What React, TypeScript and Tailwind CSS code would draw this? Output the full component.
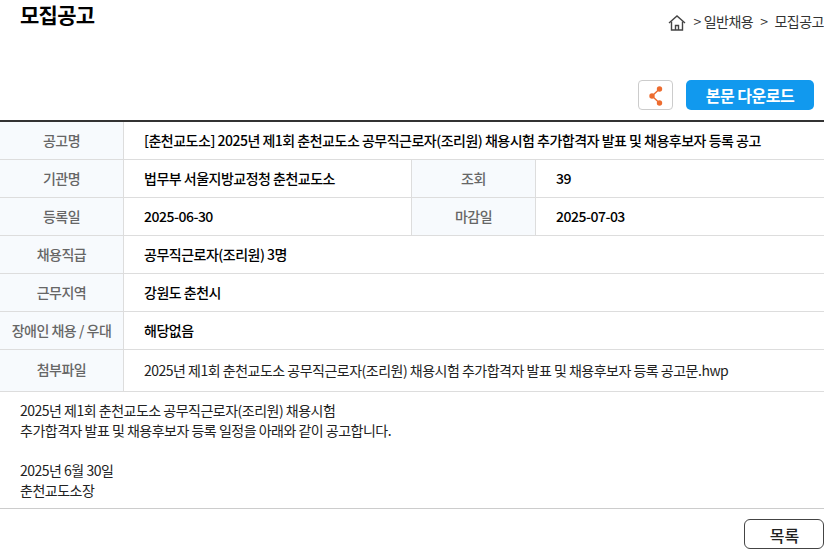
const KR = "font-['Noto_Sans_CJK_KR','Noto_Sans',sans-serif]";

function Label({ children, wide, lift }: { children: React.ReactNode; wide?: boolean; lift?: boolean }) {
  return (
    <div className={`flex items-center justify-center bg-[#f7fafd] text-[14px] font-medium tracking-[-0.5px] text-[#666] ${lift ? "pb-[2px]" : ""} ${wide ? "w-[123px]" : "w-[125px] border-x border-[#ddd]"}`}>
      {children}
    </div>
  );
}

function Row({ label, value, file }: { label: string; value: string; file?: boolean }) {
  return (
    <div className={`flex border-b border-[#ddd] ${file ? "h-[42px]" : "h-[38px]"}`}>
      <Label wide lift={file}>{label}</Label>
      <div className={`flex flex-1 items-center border-l border-[#ddd] pl-5 text-[14px] tracking-[-0.5px] ${file ? "text-[#222]" : "font-medium text-black"}`}>
        {value}
      </div>
    </div>
  );
}

function SplitRow({ a, b, c, d }: { a: string; b: string; c: string; d: string }) {
  return (
    <div className="flex h-[38px] border-b border-[#ddd]">
      <Label wide>{a}</Label>
      <div className="flex w-[288px] items-center border-l border-[#ddd] pl-5 text-[14px] font-medium tracking-[-0.5px] text-black">{b}</div>
      <Label>{c}</Label>
      <div className="flex flex-1 items-center pl-5 text-[14px] font-medium tracking-[-0.5px] text-black">{d}</div>
    </div>
  );
}

export default function App() {
  return (
    <div className={`h-[549px] w-[824px] overflow-hidden bg-white ${KR}`}>
      <div className="flex h-[80px] items-start justify-between">
        <h1 className="pl-5 text-[21px] font-bold leading-[28px] tracking-[-0.75px] text-black">모집공고</h1>
        <div className="mt-[10px] flex items-center whitespace-nowrap text-[14px] leading-[20px] tracking-[-0.5px] text-[#333]">
          <svg width="18" height="16" viewBox="0 0 18 16" fill="none" stroke="#444" strokeWidth="1.4" className="mr-[7px] mt-[5px]">
            <path d="M1 8 9 1l8 7" />
            <path d="M3.5 6.5V15h11V6.5" />
            <path d="M7.5 15v-4.5h3V15" />
          </svg>
          <span>&gt;</span>
          <span className="ml-[3px]">일반채용</span>
          <span className="ml-[7px]">&gt;</span>
          <span className="ml-[7px]">모집공고</span>
        </div>
      </div>

      <div className="flex h-[40px] items-start justify-end gap-[13px] pr-[10px]">
        <button className="flex h-[30px] w-[35px] items-center justify-center rounded-[4px] border border-[#ccc] bg-white">
          <svg width="16" height="22" viewBox="0 0 16 22" fill="none">
            <path d="M11.5 5 4 12l7.5 7" stroke="#ed6c2f" strokeWidth="1.4" />
            <circle cx="11.5" cy="5" r="2.7" fill="#ed6c2f" />
            <circle cx="4" cy="12" r="2.7" fill="#ed6c2f" />
            <circle cx="11.5" cy="19" r="2.7" fill="#ed6c2f" />
          </svg>
        </button>
        <button className="h-[30px] w-[128px] rounded-[5px] bg-[#1199ee] pb-[1px] text-[16px] font-bold tracking-[-0.5px] text-white">본문 다운로드</button>
      </div>

      <div className="border-t-2 border-[#333]">
        <Row label="공고명" value="[춘천교도소] 2025년 제1회 춘천교도소 공무직근로자(조리원) 채용시험 추가합격자 발표 및 채용후보자 등록 공고" />
        <SplitRow a="기관명" b="법무부 서울지방교정청 춘천교도소" c="조회" d="39" />
        <SplitRow a="등록일" b="2025-06-30" c="마감일" d="2025-07-03" />
        <Row label="채용직급" value="공무직근로자(조리원) 3명" />
        <Row label="근무지역" value="강원도 춘천시" />
        <Row label="장애인 채용 / 우대" value="해당없음" />
        <Row label="첨부파일" value="2025년 제1회 춘천교도소 공무직근로자(조리원) 채용시험 추가합격자 발표 및 채용후보자 등록 공고문.hwp" file />
      </div>

      <div className="h-[117px] border-b border-[#ccc] px-5 pt-[8px] text-[14px] leading-[20px] tracking-[-0.5px] text-[#222]">
        <p>2025년 제1회 춘천교도소 공무직근로자(조리원) 채용시험</p>
        <p>추가합격자 발표 및 채용후보자 등록 일정을 아래와 같이 공고합니다.</p>
        <p>&nbsp;</p>
        <p>2025년 6월 30일</p>
        <p>춘천교도소장</p>
      </div>

      <div className="mt-[10px] flex justify-end">
        <button className="h-[30px] w-[80px] rounded-[6px] border border-[#444] bg-white pl-[1px] pt-[1px] text-[16px] font-medium text-[#222]">목록</button>
      </div>
    </div>
  );
}
